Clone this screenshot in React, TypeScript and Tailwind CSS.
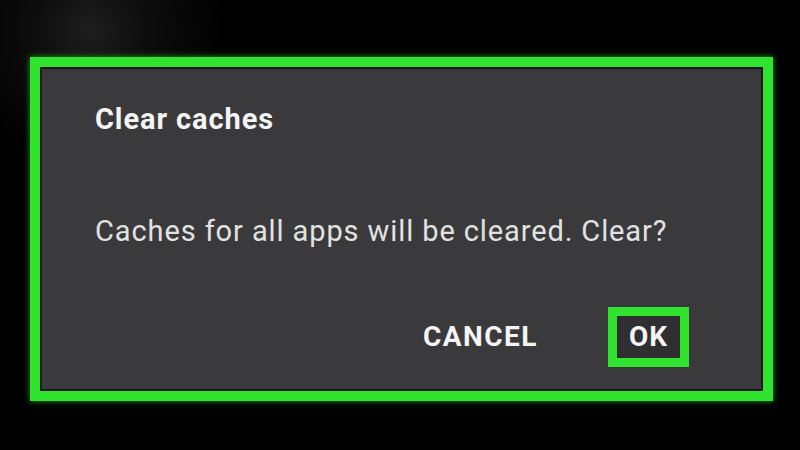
export default function App() {
  return (
    <div className="w-[800px] h-[450px] overflow-hidden bg-black bg-[radial-gradient(circle_at_90px_30px,#1e1e1e_0%,#0c0c0c_60px,#000000_140px)] pt-[57px] pl-[30px] font-['Roboto',sans-serif]">
      <div className="w-[743px] h-[344px] border-[10px] border-[#2fe32f] shadow-[0_0_6px_#1f9f1f]">
        <div className="h-full border-2 border-[#161616] bg-[#3a3a3c] pl-[53px] pr-[72px] pt-[32px] flex flex-col">
          <h2 className="text-[29px] leading-[36px] font-bold tracking-[0.9px] text-[#f4f4f4]">Clear caches</h2>
          <p className="mt-[76px] text-[29px] leading-[36px] tracking-[0.9px] text-[#e2e2e2]">
            Caches for all apps will be cleared. Clear?
          </p>
          <div className="mt-[58px] flex items-center justify-end gap-[70px]">
            <button className="text-[28px] leading-[36px] font-bold tracking-[1.5px] text-[#f4f4f4]">CANCEL</button>
            <button className="w-[81px] h-[60px] border-[9px] border-[#2fe32f] bg-[#2f2f31] flex items-center justify-center text-[28px] leading-[36px] font-bold tracking-[1px] text-[#f4f4f4]">
              OK
            </button>
          </div>
        </div>
      </div>
    </div>
  )
}
